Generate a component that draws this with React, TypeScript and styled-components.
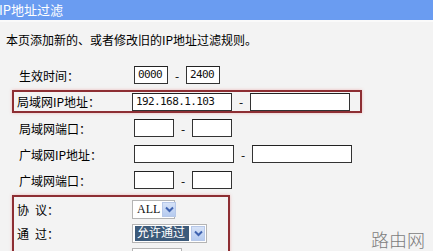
import styled, { createGlobalStyle } from 'styled-components';

const GlobalStyle = createGlobalStyle`
  html, body {
    margin: 0;
    padding: 0;
    background: #f3f3f3;
    overflow: hidden;
  }
  body {
    font-family: "Noto Sans CJK SC", "DejaVu Sans", sans-serif;
    font-size: 12px;
    color: #000;
  }
`;

const Page = styled.div`
  position: relative;
  width: 433px;
  height: 251px;
  overflow: hidden;
  background: #f3f3f3;
`;

const TitleBar = styled.div`
  height: 20px;
  background: #6a9cf1;
  color: #fff;
  font-size: 13px;
  line-height: 20px;
  text-indent: -1px;
  border-bottom: 2px solid #fafafa;
  white-space: nowrap;
`;

const Intro = styled.p`
  margin: 10px 0 0 6px;
  line-height: 16px;
  white-space: nowrap;
`;

const Form = styled.div`
  margin-top: 14px;
  padding-left: 12px;
`;

const Row = styled.div<{ $height?: number }>`
  display: flex;
  align-items: center;
  height: ${(p) => p.$height ?? 26}px;
  padding-left: 5px;
  box-sizing: border-box;
  border-left: 2px solid transparent;
`;

const MarkedRow = styled(Row)`
  width: 350px;
  height: 23px;
  margin: 2px 0;
  padding-left: 3px;
  border: 2px solid #8d2e33;
  box-shadow: 0 0 3px rgba(230, 80, 80, 0.35);
`;

const MarkedGroup = styled.div`
  width: 218px;
  margin-top: 2px;
  box-sizing: border-box;
  border: 2px solid #8d2e33;
  border-bottom: none;
  box-shadow: 0 0 3px rgba(230, 80, 80, 0.35);
  & > div {
    border-left: none;
    padding-left: 3px;
  }
`;

const Label = styled.span`
  width: 115px;
  flex: none;
  white-space: pre;
`;

const Field = styled.div<{ $w: number }>`
  width: ${(p) => p.$w}px;
  height: 18px;
  box-sizing: border-box;
  border: 1px solid #333;
  border-top-color: #222;
  background: #fff;
  font-family: "DejaVu Sans Mono", monospace;
  font-size: 11px;
  letter-spacing: -0.6px;
  line-height: 16px;
  padding-left: 3px;
  color: #111;
`;

const Dash = styled.span<{ $w: number }>`
  width: ${(p) => p.$w}px;
  text-align: center;
  font-size: 12px;
`;

const Select = styled.div<{ $w: number }>`
  display: flex;
  align-items: center;
  width: ${(p) => p.$w}px;
  height: 19px;
  box-sizing: border-box;
  border: 1px solid #b4b4b4;
  background: #fff;
  padding: 1px 1px 1px 2px;
  gap: 2px;
`;

const SelectText = styled.span<{ $selected?: boolean }>`
  flex: 1;
  height: 15px;
  line-height: 15px;
  padding-left: 2px;
  font-family: "Liberation Serif", "Noto Sans CJK SC", serif;
  font-size: 12px;
  white-space: nowrap;
  background: ${(p) => (p.$selected ? '#3c5a7a' : 'transparent')};
  color: ${(p) => (p.$selected ? '#fff' : '#111')};
`;

const ArrowButton = styled.span`
  flex: none;
  width: 14px;
  height: 15px;
  display: flex;
  align-items: center;
  justify-content: center;
  box-sizing: border-box;
  border: 1px solid #b7c8e8;
  background: linear-gradient(#d6e2f7, #b6cbef);
`;

const Watermark = styled.div`
  position: absolute;
  left: 371px;
  top: 226px;
  font-size: 18px;
  color: #7c7c7c;
  font-weight: 300;
  white-space: nowrap;
`;

const Chevron = () => (
  <svg width="9" height="7" viewBox="0 0 9 7">
    <path d="M1 1.5 L4.5 5 L8 1.5" fill="none" stroke="#3f63b0" strokeWidth="2" />
  </svg>
);

const Dropdown = ({ w, value, selected }: { w: number; value: string; selected?: boolean }) => (
  <Select $w={w}>
    <SelectText $selected={selected}>{value}</SelectText>
    <ArrowButton>
      <Chevron />
    </ArrowButton>
  </Select>
);

export default function App() {
  return (
    <Page>
      <GlobalStyle />
      <TitleBar>IP地址过滤</TitleBar>
      <Intro>本页添加新的、或者修改旧的IP地址过滤规则。</Intro>
      <Form>
        <Row>
          <Label>生效时间：</Label>
          <Field $w={34}>0000</Field>
          <Dash $w={18}>-</Dash>
          <Field $w={34}>2400</Field>
        </Row>
        <MarkedRow>
          <Label>局域网IP地址：</Label>
          <Field $w={100}>192.168.1.103</Field>
          <Dash $w={18}>-</Dash>
          <Field $w={100} />
        </MarkedRow>
        <Row>
          <Label>局域网端口：</Label>
          <Field $w={40} />
          <Dash $w={18}>-</Dash>
          <Field $w={40} />
        </Row>
        <Row>
          <Label>广域网IP地址：</Label>
          <Field $w={100} />
          <Dash $w={18}>-</Dash>
          <Field $w={100} />
        </Row>
        <Row>
          <Label>广域网端口：</Label>
          <Field $w={40} />
          <Dash $w={18}>-</Dash>
          <Field $w={40} />
        </Row>
        <MarkedGroup>
          <Row $height={24}>
            <Label>协{'\u2002'}议：</Label>
            <Dropdown w={43} value="ALL" />
          </Row>
          <Row $height={24}>
            <Label>通{'\u2002'}过：</Label>
            <Dropdown w={75} value="允许通过" selected />
          </Row>
          <Row $height={24}>
            <Label />
            <Select $w={50} />
          </Row>
        </MarkedGroup>
      </Form>
      <Watermark>路由网</Watermark>
    </Page>
  );
}
